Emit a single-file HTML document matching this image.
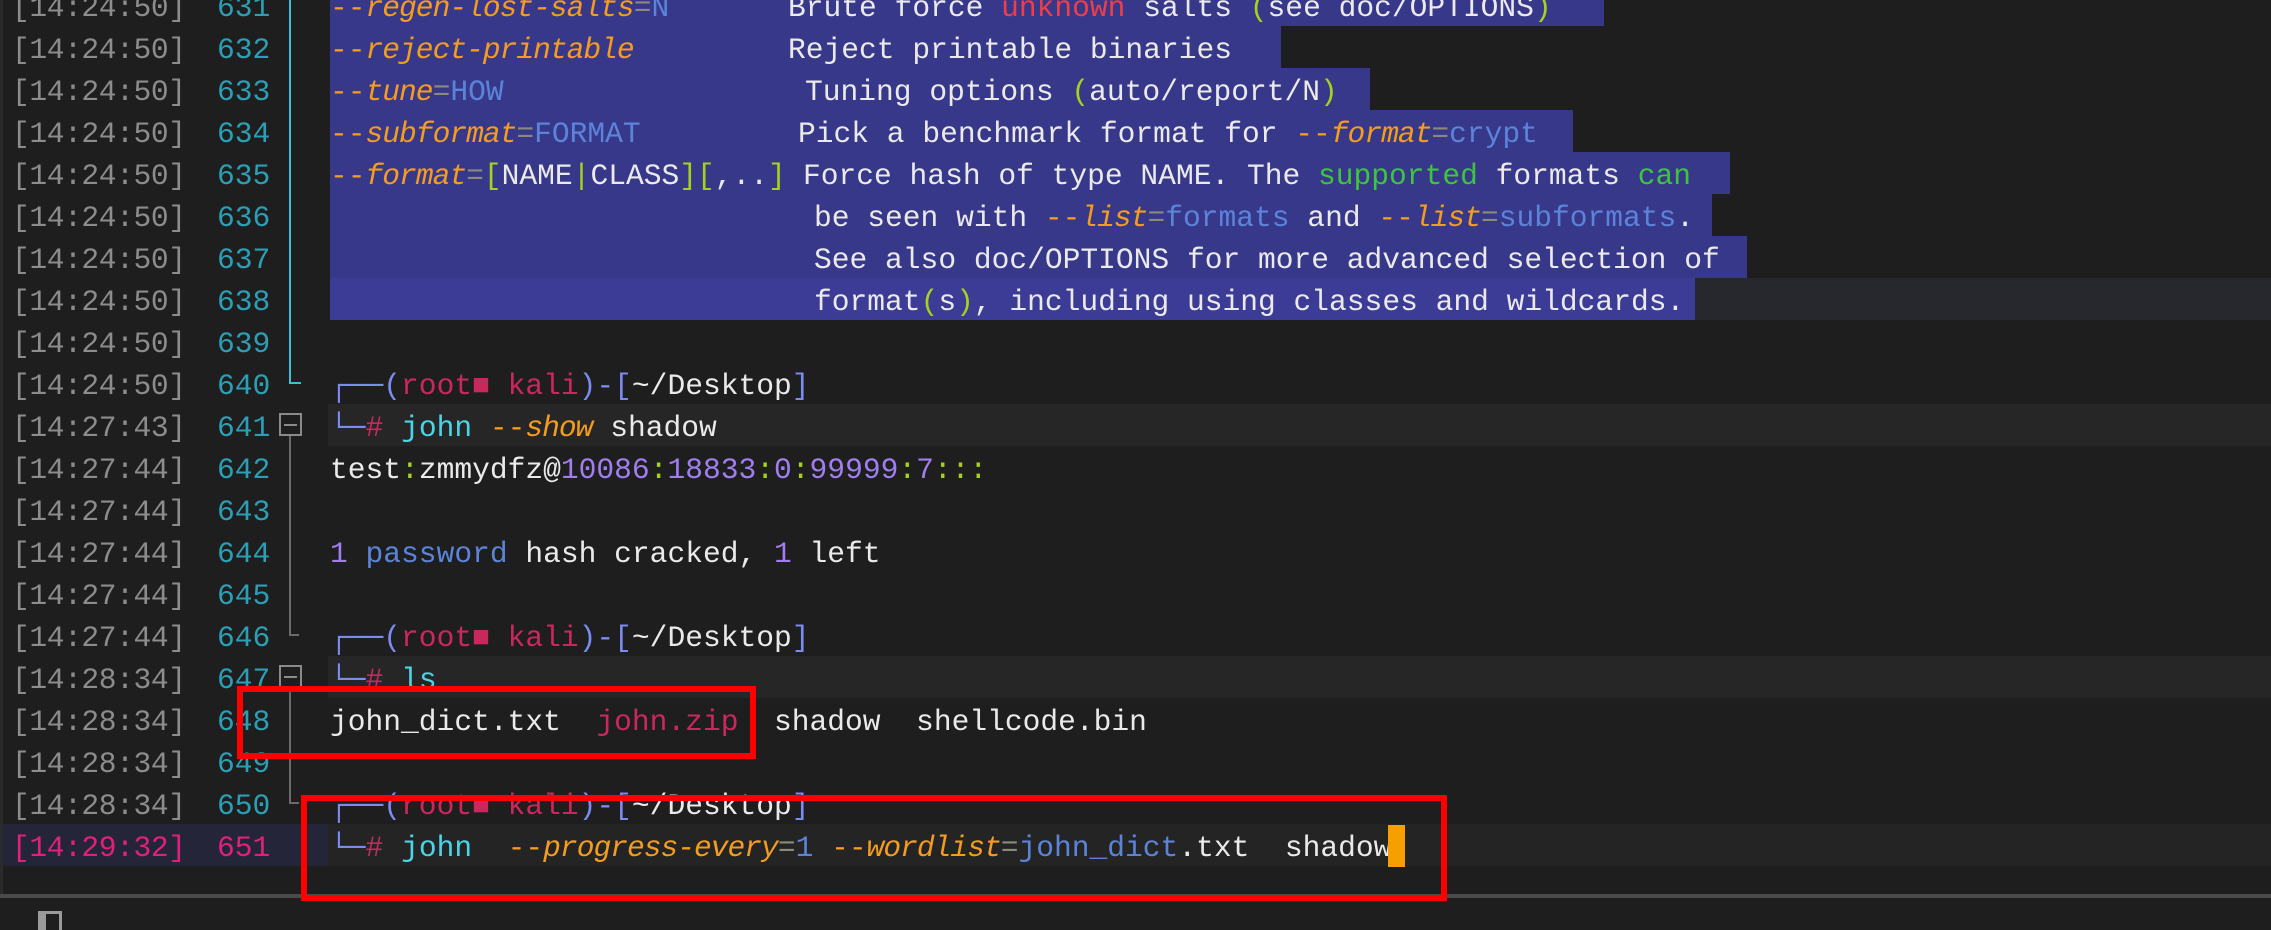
<!DOCTYPE html>
<html><head><meta charset="utf-8"><style>
html,body{margin:0;padding:0;background:#1e1e1e;width:2271px;height:930px;overflow:hidden;position:relative}
*{box-sizing:border-box}
.r{position:absolute;left:0;width:2271px;height:42px;line-height:42px;margin-top:3px;font-family:"Liberation Mono","DejaVu Sans Mono",monospace;font-size:29.6px;white-space:pre;color:#eaeaea}
.ts{position:absolute;left:12px;color:#8c8c8c;letter-spacing:-0.4px}
.ln{position:absolute;left:217px;color:#2b9fb5}
.t{position:absolute;left:330px}
.d{position:absolute}
.sel{position:absolute;left:330px;height:42px;background:#38388b}
.hl{position:absolute;height:42px;background:#262626}
.o{color:#f39c1f}.i{font-style:italic;letter-spacing:-1px}
.e{color:#8a8a7a}.v{color:#5b84d8}.y{color:#a6d21e}.rd{color:#ef3d4a}.g{color:#3ec43e}
.b{color:#7a8cf0}.k{color:#c9285d}.c{color:#4ad5e6}.p{color:#a07ef0}
.box{position:absolute;border:6px solid #ff0000}
</style></head><body>

<div class="sel" style="top:-16px;width:1274px"></div>
<div class="sel" style="top:26px;width:951px"></div>
<div class="sel" style="top:68px;width:1040px"></div>
<div class="sel" style="top:110px;width:1243px"></div>
<div class="sel" style="top:152px;width:1400px"></div>
<div class="sel" style="top:194px;width:1382px"></div>
<div class="sel" style="top:236px;width:1417px"></div>
<div class="hl" style="top:278px;left:1695px;width:576px;background:#27272e"></div>
<div class="sel" style="top:278px;width:1365px;background:#3c3c96"></div>
<div class="hl" style="top:404px;left:328px;width:1943px"></div>
<div class="hl" style="top:656px;left:328px;width:1943px"></div>
<div class="hl" style="top:824px;left:0;width:328px;background:#25253a"></div>
<div class="hl" style="top:824px;left:328px;width:1943px;background:#242424"></div>

<div style="position:absolute;left:0;top:0;width:3px;height:896px;background:#2a2a2a"></div>
<div style="position:absolute;left:289px;top:0;width:2px;height:384px;background:#3ac0d8"></div>
<div style="position:absolute;left:289px;top:382px;width:12px;height:2px;background:#3ac0d8"></div>
<div style="position:absolute;left:279px;top:413px;width:23px;height:23px;border:2px solid #8a8a8a"></div>
<div style="position:absolute;left:284px;top:424px;width:13px;height:2px;background:#8a8a8a"></div>
<div style="position:absolute;left:289px;top:436px;width:2px;height:200px;background:#6a6a6a"></div>
<div style="position:absolute;left:289px;top:634px;width:10px;height:2px;background:#6a6a6a"></div>
<div style="position:absolute;left:279px;top:665px;width:23px;height:23px;border:2px solid #8a8a8a"></div>
<div style="position:absolute;left:284px;top:676px;width:13px;height:2px;background:#8a8a8a"></div>
<div style="position:absolute;left:289px;top:688px;width:2px;height:116px;background:#6a6a6a"></div>
<div style="position:absolute;left:289px;top:802px;width:10px;height:2px;background:#6a6a6a"></div>

<div class="r" style="top:-16px"><span class="ts">[14:24:50]</span><span class="ln">631</span><span class="t"><span class="o">--<span class="i">regen-lost-salts</span></span><span class="e">=</span><span class="v">N</span></span><span class="d" style="left:788px">Brute force <span class="rd">unknown</span> salts <span class="y">(</span>see doc/OPTIONS<span class="y">)</span></span></div>
<div class="r" style="top:26px"><span class="ts">[14:24:50]</span><span class="ln">632</span><span class="t"><span class="o">--<span class="i">reject-printable</span></span></span><span class="d" style="left:788px">Reject printable binaries</span></div>
<div class="r" style="top:68px"><span class="ts">[14:24:50]</span><span class="ln">633</span><span class="t"><span class="o">--<span class="i">tune</span></span><span class="e">=</span><span class="v">HOW</span></span><span class="d" style="left:805px">Tuning options <span class="y">(</span>auto/report/N<span class="y">)</span></span></div>
<div class="r" style="top:110px"><span class="ts">[14:24:50]</span><span class="ln">634</span><span class="t"><span class="o">--<span class="i">subformat</span></span><span class="e">=</span><span class="v">FORMAT</span></span><span class="d" style="left:798px">Pick a benchmark format for <span class="o">--<span class="i">format</span></span><span class="e">=</span><span class="v">crypt</span></span></div>
<div class="r" style="top:152px"><span class="ts">[14:24:50]</span><span class="ln">635</span><span class="t"><span class="o">--<span class="i">format</span></span><span class="e">=</span><span class="y">[</span>NAME<span class="y">|</span>CLASS<span class="y">][</span>,..<span class="y">]</span></span><span class="d" style="left:803px">Force hash of type NAME. The <span class="g">supported</span> formats <span class="g">can</span></span></div>
<div class="r" style="top:194px"><span class="ts">[14:24:50]</span><span class="ln">636</span><span class="d" style="left:814px">be seen with <span class="o">--<span class="i">list</span></span><span class="e">=</span><span class="v">formats</span> and <span class="o">--<span class="i">list</span></span><span class="e">=</span><span class="v">subformats</span>.</span></div>
<div class="r" style="top:236px"><span class="ts">[14:24:50]</span><span class="ln">637</span><span class="d" style="left:814px">See also doc/OPTIONS for more advanced selection of</span></div>
<div class="r" style="top:278px"><span class="ts">[14:24:50]</span><span class="ln">638</span><span class="d" style="left:814px">format<span class="y">(</span>s<span class="y">)</span>, including using classes and wildcards.</span></div>
<div class="r" style="top:320px"><span class="ts">[14:24:50]</span><span class="ln">639</span></div>
<div class="r" style="top:362px"><span class="ts">[14:24:50]</span><span class="ln">640</span><span class="t"><span class="b">┌──(</span><span class="k">root■ kali</span><span class="b">)-[</span>~/Desktop<span class="b">]</span></span></div>
<div class="r" style="top:404px"><span class="ts">[14:27:43]</span><span class="ln">641</span><span class="t"><span class="b">└─</span><span class="k">#</span> <span class="c">john</span> <span class="o">--<span class="i">show</span></span> shadow</span></div>
<div class="r" style="top:446px"><span class="ts">[14:27:44]</span><span class="ln">642</span><span class="t">test<span class="y">:</span>zmmydfz@<span class="p">10086</span><span class="y">:</span><span class="p">18833</span><span class="y">:</span><span class="p">0</span><span class="y">:</span><span class="p">99999</span><span class="y">:</span><span class="p">7</span><span class="y">:::</span></span></div>
<div class="r" style="top:488px"><span class="ts">[14:27:44]</span><span class="ln">643</span></div>
<div class="r" style="top:530px"><span class="ts">[14:27:44]</span><span class="ln">644</span><span class="t"><span class="p">1</span> <span class="v">password</span> hash cracked, <span class="p">1</span> left</span></div>
<div class="r" style="top:572px"><span class="ts">[14:27:44]</span><span class="ln">645</span></div>
<div class="r" style="top:614px"><span class="ts">[14:27:44]</span><span class="ln">646</span><span class="t"><span class="b">┌──(</span><span class="k">root■ kali</span><span class="b">)-[</span>~/Desktop<span class="b">]</span></span></div>
<div class="r" style="top:656px"><span class="ts">[14:28:34]</span><span class="ln">647</span><span class="t"><span class="b">└─</span><span class="k">#</span> <span class="c">ls</span></span></div>
<div class="r" style="top:698px"><span class="ts">[14:28:34]</span><span class="ln">648</span><span class="t">john_dict.txt  <span class="k">john.zip</span>  shadow  shellcode.bin</span></div>
<div class="r" style="top:740px"><span class="ts">[14:28:34]</span><span class="ln">649</span></div>
<div class="r" style="top:782px"><span class="ts">[14:28:34]</span><span class="ln">650</span><span class="t"><span class="b">┌──(</span><span class="k">root■ kali</span><span class="b">)-[</span>~/Desktop<span class="b">]</span></span></div>
<div class="r" style="top:824px"><span class="ts" style="color:#e0207a">[14:29:32]</span><span class="ln" style="color:#e0207a">651</span><span class="t"><span class="b">└─</span><span class="k">#</span> <span class="c">john</span>  <span class="o">--<span class="i">progress-every</span></span><span class="e">=</span><span class="v">1</span> <span class="o">--<span class="i">wordlist</span></span><span class="e">=</span><span class="v">john_dict</span>.txt  shadow</span></div>
<div style="position:absolute;left:1388px;top:825px;width:17px;height:42px;background:#f5a000"></div>

<div style="position:absolute;left:0;top:894px;width:2271px;height:4px;background:#4a4a4a"></div>
<div style="position:absolute;left:38px;top:911px;width:24px;height:19px;border:3px solid #9a9a9a;border-bottom:none;border-left-width:8px"></div>

<div class="box" style="left:237px;top:686px;width:519px;height:73px"></div>
<div class="box" style="left:301px;top:795px;width:1146px;height:106px"></div>
</body></html>
